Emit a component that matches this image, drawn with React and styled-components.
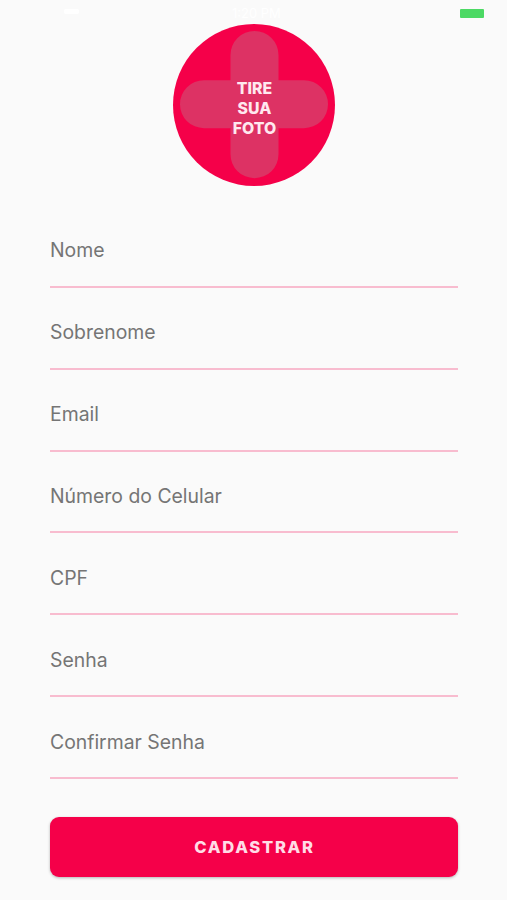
import React from 'react';
import styled, { createGlobalStyle } from 'styled-components';

const GlobalStyle = createGlobalStyle`
  * { box-sizing: border-box; }
  html, body { margin: 0; padding: 0; background: #fafafa; }
  body { font-family: Inter, Roboto, sans-serif; overflow: hidden; }
`;

const Screen = styled.main`
  display: flex;
  flex-direction: column;
  width: 507px;
  height: 900px;
  overflow: hidden;
  background: #fafafa;
`;

const StatusBar = styled.header`
  display: grid;
  grid-template-columns: 216px 1fr auto;
  align-items: center;
  height: 23.5px;
  padding: 3px 23px 0 16px;
  color: #fff;
  font-size: 13px;
`;

const Wifi = styled.span`
  width: 15px;
  height: 5px;
  margin: 0 0 3px 48px;
  border-radius: 2px;
  background: #fff;
`;

const Battery = styled.span`
  justify-self: end;
  width: 24px;
  height: 9px;
  border-radius: 1px;
  background: #4cd964;
`;

const PhotoButton = styled.button`
  display: grid;
  place-items: center;
  flex: none;
  align-self: center;
  width: 162px;
  height: 162px;
  padding: 0;
  margin-left: 1px;
  border: 0;
  border-radius: 50%;
  background: #f50049;
  font-family: inherit;
`;

const Cross = styled.svg`
  grid-area: 1 / 1;
  width: 162px;
  height: 162px;
`;

const PhotoLabel = styled.span`
  grid-area: 1 / 1;
  width: 60px;
  padding: 9px 0 0 1px;
  color: #ffe9ef;
  font-size: 15.8px;
  font-weight: 800;
  line-height: 19.7px;
  text-align: center;
`;

const Form = styled.form`
  display: flex;
  flex-direction: column;
  width: 408px;
  margin: 20.5px 0 0 50px;
`;

const Field = styled.input`
  flex: none;
  width: 100%;
  height: 81.87px;
  padding: 9px 0 0;
  border: 0;
  border-bottom: 2px solid #f8bccf;
  border-radius: 0;
  outline: 0;
  background: transparent;
  color: #707070;
  font-family: inherit;
  font-size: 19.4px;

  &::placeholder { color: #757575; opacity: 1; }
`;

const SubmitButton = styled.button`
  width: 408px;
  height: 60px;
  margin-top: 38.4px;
  padding: 0 0 1px 1px;
  border: 0;
  border-radius: 9px;
  background: #f50049;
  box-shadow: 0 1px 3px rgba(0, 0, 0, 0.28);
  color: #ffdce6;
  font-family: inherit;
  font-size: 16.6px;
  font-weight: 800;
  letter-spacing: 1.7px;
`;

const fields = [
  { label: 'Nome', type: 'text' },
  { label: 'Sobrenome', type: 'text' },
  { label: 'Email', type: 'email' },
  { label: 'Número do Celular', type: 'tel' },
  { label: 'CPF', type: 'text' },
  { label: 'Senha', type: 'password' },
  { label: 'Confirmar Senha', type: 'password' },
];

export default function App() {
  return (
    <>
      <GlobalStyle />
      <Screen>
        <StatusBar>
          <Wifi />
          <span>1:20 PM</span>
          <Battery />
        </StatusBar>
        <PhotoButton type="button">
          <Cross viewBox="0 0 162 162" aria-hidden="true">
            <path
              d="M57.5 31a24 24 0 0 1 48 0v25.2H131a24 24 0 0 1 0 48h-25.5v26a24 24 0 0 1-48 0v-26H31a24 24 0 0 1 0-48h26.5z"
              fill="#dd3264"
            />
          </Cross>
          <PhotoLabel>TIRE SUA FOTO</PhotoLabel>
        </PhotoButton>
        <Form>
          {fields.map((field) => (
            <Field key={field.label} type={field.type} placeholder={field.label} />
          ))}
          <SubmitButton type="button">CADASTRAR</SubmitButton>
        </Form>
      </Screen>
    </>
  );
}
